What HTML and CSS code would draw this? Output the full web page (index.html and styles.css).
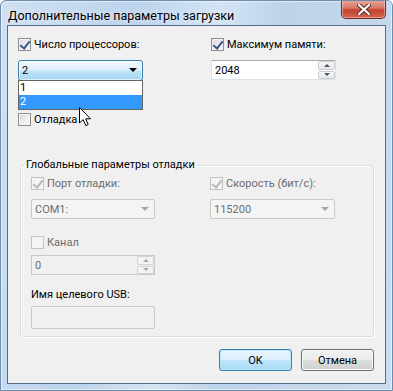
FILE: index.html
```html
<!DOCTYPE html>
<html lang="ru">
<head>
    <meta charset="UTF-8">
    <meta name="viewport" content="width=device-width, initial-scale=1.0">
    <title>Дополнительные параметры загрузки</title>
    <link rel="stylesheet" href="styles.css">
</head>
<body>

<div class="window">
    <div class="titlebar">
        <span class="title">Дополнительные параметры загрузки</span>
        <button class="close-btn" aria-label="Закрыть">
            <svg width="14" height="11" viewBox="0 0 14 11">
                <path d="M2 1 L12 10 M12 1 L2 10" stroke="#5b2a2a" stroke-width="4" stroke-linecap="round"/>
                <path d="M2 1 L12 10 M12 1 L2 10" stroke="#fff" stroke-width="2.2" stroke-linecap="round"/>
            </svg>
        </button>
    </div>

    <div class="client">
        <div class="top-grid">
            <div class="col">
                <label class="check"><span class="box checked"></span>Число процессоров:</label>
                <div class="combo hot">
                    <span class="combo-text">2</span>
                    <span class="arrow"></span>
                    <ul class="droplist">
                        <li>1</li>
                        <li class="selected">2</li>
                    </ul>
                </div>
                <label class="check debug-row"><span class="box"></span>Отладка</label>
            </div>
            <div class="col">
                <label class="check"><span class="box checked"></span>Максимум памяти:</label>
                <div class="spin">
                    <span class="spin-text">2048</span>
                    <span class="spin-btns">
                        <span class="spin-btn"><span class="tri up"></span></span>
                        <span class="spin-btn"><span class="tri down"></span></span>
                    </span>
                </div>
            </div>
        </div>

        <fieldset class="group">
            <legend>Глобальные параметры отладки</legend>
            <div class="group-grid">
                <div class="col">
                    <label class="check disabled"><span class="box checked"></span>Порт отладки:</label>
                    <div class="combo disabled">
                        <span class="combo-text">COM1:</span>
                        <span class="arrow"></span>
                    </div>
                    <label class="check disabled channel-row"><span class="box"></span>Канал</label>
                    <div class="spin disabled small">
                        <span class="spin-text">0</span>
                        <span class="spin-btns">
                            <span class="spin-btn"><span class="tri up"></span></span>
                            <span class="spin-btn"><span class="tri down"></span></span>
                        </span>
                    </div>
                    <div class="field-label">Имя целевого USB:</div>
                    <div class="textbox disabled"></div>
                </div>
                <div class="col">
                    <label class="check disabled"><span class="box checked"></span>Скорость (бит/с):</label>
                    <div class="combo disabled wide">
                        <span class="combo-text">115200</span>
                        <span class="arrow"></span>
                    </div>
                </div>
            </div>
        </fieldset>

        <div class="button-row">
            <button class="btn default">OK</button>
            <button class="btn">Отмена</button>
        </div>
    </div>

    <!-- mouse pointer over the open list -->
    <svg class="pointer" width="13" height="20" viewBox="0 0 13 20">
        <path d="M0.5 0.5 L0.5 16 L4.2 12.6 L6.8 18.6 L9.2 17.6 L6.7 11.8 L11.5 11.8 Z" fill="#fff" stroke="#000" stroke-width="1"/>
    </svg>
</div>

</body>
</html>
```

FILE: styles.css
```css
* {
    box-sizing: border-box;
}
body {
    margin: 0;
    padding: 0;
    font-family: Roboto, 'Liberation Sans', Arial, sans-serif;
    font-size: 11px;
    color: #000;
    background: #fff;
}
.window {
    position: relative;
    width: 393px;
    height: 391px;
    display: flex;
    flex-direction: column;
    border: 1px solid #6d8bab;
    border-radius: 6px 6px 0 0;
    background: linear-gradient(100deg, #cfe0f2 0%, #bcd3ec 30%, #d4e4f5 48%, #bdd3ea 62%, #c9dcf0 100%);
    box-shadow: inset 0 0 0 1px rgba(255, 255, 255, 0.55);
    overflow: hidden;
}
.titlebar {
    height: 28px;
    display: flex;
    align-items: flex-start;
    justify-content: space-between;
    padding-left: 7px;
}
.title {
    margin-top: 7px;
    font-size: 12.5px;
    color: #000;
    text-shadow: 0 0 6px rgba(255, 255, 255, 0.9);
}
.close-btn {
    width: 45px;
    height: 19px;
    margin: -1px 6px 0 0;
    padding: 0;
    display: flex;
    align-items: center;
    justify-content: center;
    border: 1px solid #6b2d2a;
    border-top: none;
    border-radius: 0 0 5px 5px;
    background: linear-gradient(#e9a99b 0%, #d67966 45%, #c2432f 55%, #d3634a 100%);
    box-shadow: inset 0 0 0 1px rgba(255, 220, 210, 0.5);
}
.client {
    flex: 1;
    margin: 0 6px 6px 6px;
    background-color: #f0f0f0;
    border: 1px solid #556d88;
    padding: 12px 11px 12px 10px;
    display: flex;
    flex-direction: column;
}

/* checkboxes */
.check {
    display: flex;
    align-items: center;
    gap: 3px;
    height: 13px;
    white-space: nowrap;
}
.box {
    position: relative;
    width: 13px;
    height: 13px;
    flex: none;
    border: 1px solid #8e8f8f;
    background: linear-gradient(135deg, #d4d7db 0%, #f3f3f3 70%, #fafafa 100%);
    box-shadow: inset 0 0 0 1px #f4f4f4;
}
.box.checked::after {
    content: '';
    position: absolute;
    left: 3px;
    top: 0px;
    width: 4px;
    height: 8px;
    border-right: 2px solid #3d5690;
    border-bottom: 2px solid #3d5690;
    transform: rotate(38deg);
}
.check.disabled {
    color: #6d6d6d;
}
.check.disabled .box {
    border-color: #c3c3c3;
    background: #f4f4f4;
    box-shadow: none;
}
.check.disabled .box.checked::after {
    border-color: #b9b9b9;
}

/* top part */
.top-grid {
    display: grid;
    grid-template-columns: 193px 1fr;
}
.col {
    display: flex;
    flex-direction: column;
}
.combo {
    position: relative;
    width: 125px;
    height: 21px;
    margin-top: 9px;
    display: flex;
    align-items: center;
    padding-left: 3px;
    border: 1px solid #3c7fb1;
    border-radius: 3px;
}
.combo.hot {
    background: linear-gradient(#f2f9fd 0%, #dff1fc 45%, #bfe3f8 55%, #a6d6f2 100%);
    box-shadow: inset 0 0 0 1px rgba(255, 255, 255, 0.6);
}
.arrow {
    position: absolute;
    right: 5px;
    top: 7px;
    width: 0;
    height: 0;
    border-left: 4px solid transparent;
    border-right: 4px solid transparent;
    border-top: 4px solid #000;
}
.combo.disabled {
    width: 124px;
    height: 20px;
    border-color: #c9c9c9;
    border-radius: 2px;
    background: #f4f4f4;
    color: #6d6d6d;
}
.combo.disabled.wide {
    width: 125px;
}
.combo.disabled .arrow {
    border-top-color: #a6a6a6;
    top: 7px;
}
.droplist {
    position: absolute;
    left: -1px;
    top: 19px;
    width: 125px;
    margin: 0;
    padding: 0;
    list-style: none;
    background: #fff;
    border: 1px solid #646464;
    z-index: 2;
}
.droplist li {
    height: 14px;
    line-height: 14px;
    padding-left: 1px;
}
.droplist li.selected {
    background-color: #3399ff;
    color: #fff;
}
.debug-row {
    margin-top: 32px;
}

/* spin edits */
.spin {
    width: 125px;
    height: 20px;
    margin-top: 9px;
    display: flex;
    align-items: center;
    justify-content: space-between;
    padding-left: 3px;
    background: #fff;
    border: 1px solid #dbdfe6;
    border-top-color: #abadb3;
}
.spin-btns {
    display: flex;
    flex-direction: column;
    width: 17px;
    height: 18px;
    gap: 1px;
    margin-right: 0;
}
.spin-btn {
    flex: 1;
    display: flex;
    align-items: center;
    justify-content: center;
    border: 1px solid #c8ccd2;
    border-radius: 2px;
    background: linear-gradient(#f8f8f8, #e6e6e6);
}
.tri {
    width: 0;
    height: 0;
    border-left: 3px solid transparent;
    border-right: 3px solid transparent;
}
.tri.up {
    border-bottom: 3px solid #4b5563;
}
.tri.down {
    border-top: 3px solid #4b5563;
}
.spin.disabled {
    width: 124px;
    background: #f0f0f0;
    border-color: #c9c9c9;
    color: #6d6d6d;
}
.spin.disabled .spin-btn {
    border-color: #d3d3d3;
    background: #f4f4f4;
}
.spin.disabled .tri.up {
    border-bottom-color: #a8a8a8;
}
.spin.disabled .tri.down {
    border-top-color: #a8a8a8;
}

/* group box */
.group {
    margin: 32px 0 0 2px;
    padding: 5px 0 7px 10px;
    border: 1px solid #d5dfe5;
    border-radius: 3px;
    box-shadow: 1px 1px 0 #fff, inset 1px 1px 0 #fff;
    min-width: 0;
}
.group legend {
    padding: 0 2px;
    margin-left: -7px;
    line-height: 14px;
}
.group-grid {
    display: grid;
    grid-template-columns: 179px 1fr;
}
.channel-row {
    margin-top: 17px;
}
.spin.small {
    margin-top: 6px;
}
.field-label {
    margin-top: 13px;
    line-height: 14px;
}
.textbox {
    width: 124px;
    height: 23px;
    margin-top: 4px;
    border: 1px solid #c9c9c9;
    border-radius: 2px;
    background: #f0f0f0;
}

/* buttons */
.button-row {
    display: flex;
    justify-content: flex-end;
    gap: 9px;
    margin-top: 12px;
}
.btn {
    width: 73px;
    height: 22px;
    padding: 0;
    font-family: inherit;
    font-size: 11px;
    color: #000;
    border: 1px solid #707070;
    border-radius: 3px;
    background: linear-gradient(#f2f2f2 0%, #ebebeb 48%, #dddddd 52%, #cfcfcf 100%);
    box-shadow: inset 0 0 0 1px #fbfbfb;
}
.btn.default {
    border-color: #3c7fb1;
    background: linear-gradient(#eaf6fd 0%, #d9f0fc 48%, #bee6fd 52%, #a7d9f5 100%);
    box-shadow: inset 0 0 0 1px #b9e5fa;
}

.pointer {
    position: absolute;
    left: 78px;
    top: 106px;
    z-index: 5;
}
```
